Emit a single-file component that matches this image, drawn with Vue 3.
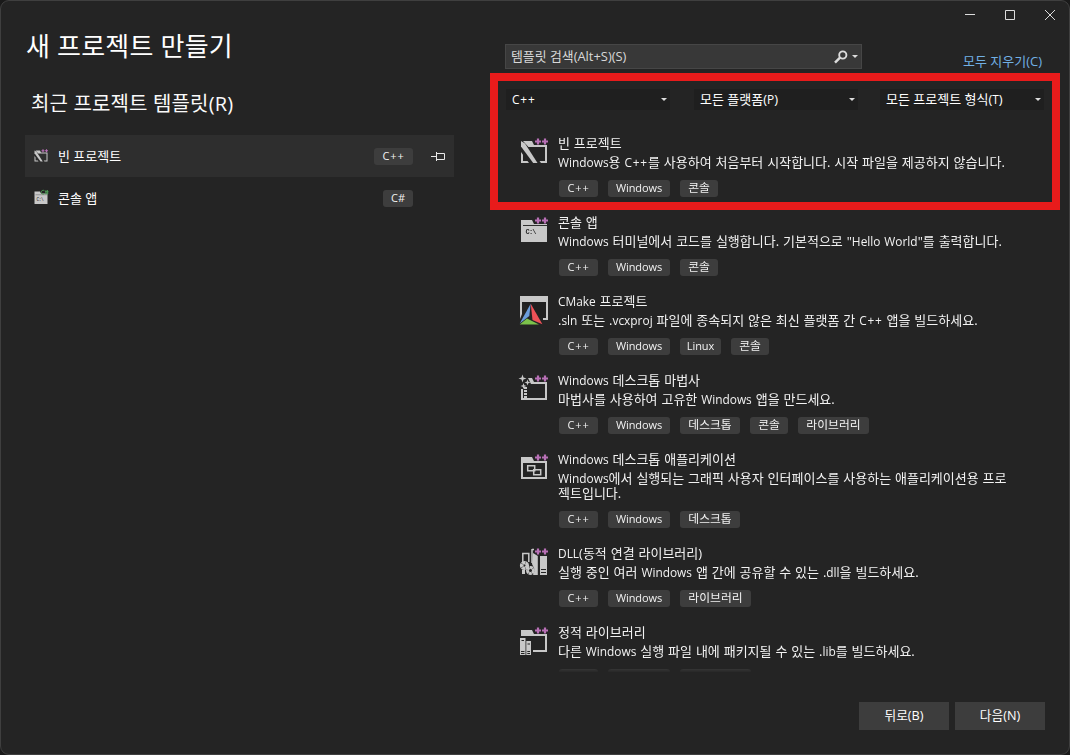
<script setup>
import { h } from 'vue'

const recent = [
  { name: '빈 프로젝트', tag: 'C++', icon: 'blank', pinned: true },
  { name: '콘솔 앱', tag: 'C#', icon: 'cs', pinned: false },
]
const filters = ['C++', '모든 플랫폼(P)', '모든 프로젝트 형식(T)']
const templates = [
  { icon: 'blank', name: '빈 프로젝트', lines: ['Windows용 C++를 사용하여 처음부터 시작합니다. 시작 파일을 제공하지 않습니다.'], tags: ['C++', 'Windows', '콘솔'] },
  { icon: 'console', name: '콘솔 앱', lines: ['Windows 터미널에서 코드를 실행합니다. 기본적으로 "Hello World"를 출력합니다.'], tags: ['C++', 'Windows', '콘솔'] },
  { icon: 'cmake', name: 'CMake 프로젝트', lines: ['.sln 또는 .vcxproj 파일에 종속되지 않은 최신 플랫폼 간 C++ 앱을 빌드하세요.'], tags: ['C++', 'Windows', 'Linux', '콘솔'] },
  { icon: 'wizard', name: 'Windows 데스크톱 마법사', lines: ['마법사를 사용하여 고유한 Windows 앱을 만드세요.'], tags: ['C++', 'Windows', '데스크톱', '콘솔', '라이브러리'] },
  { icon: 'desktop', name: 'Windows 데스크톱 애플리케이션', lines: ['Windows에서 실행되는 그래픽 사용자 인터페이스를 사용하는 애플리케이션용 프로', '젝트입니다.'], tags: ['C++', 'Windows', '데스크톱'] },
  { icon: 'dll', name: 'DLL(동적 연결 라이브러리)', lines: ['실행 중인 여러 Windows 앱 간에 공유할 수 있는 .dll을 빌드하세요.'], tags: ['C++', 'Windows', '라이브러리'] },
  { icon: 'lib', name: '정적 라이브러리', lines: ['다른 Windows 실행 파일 내에 패키지될 수 있는 .lib를 빌드하세요.'], tags: ['C++', 'Windows', '라이브러리'] },
]
const tagWidth = { 'C++': 39, 'C#': 30, Windows: 62, Linux: 41, 콘솔: 38, 데스크톱: 60, 라이브러리: 71 }

// Sets Latin words slightly smaller than the Hangul around them.
const Mixed = (props) =>
  h('span', props.text.split(/([A-Za-z+#]+)/).map((p, i) =>
    i % 2 ? h('span', { class: p.includes('+') ? 'latin plus' : 'latin' }, p) : p))
Mixed.props = ['text']
</script>

<template>
  <div class="window">
    <svg class="defs" width="0" height="0">
      <symbol id="plus" viewBox="0 0 32 34">
        <path d="M17 7.500h6M20 4.500v6M24 7.500h6M27 4.500v6" stroke="#b870b6" stroke-width="2.200" fill="none" />
      </symbol>
      <symbol id="blank" viewBox="0 0 32 34">
        <path d="M5 7h9l2 4h13v18h-6l-1.500-2H27V13H10.500z" fill="#c8c8c8" />
        <path d="M3 7l4 2.500L19.500 29h-4.300L3 12.500z" fill="#c8c8c8" />
        <path d="M3 18l2 2.800V27h4.500l1.500 2H3z" fill="#c8c8c8" />
        <use href="#plus" />
      </symbol>
      <symbol id="console" viewBox="0 0 32 34">
        <path d="M3 7h11l2 4h13v18H3z" fill="#c8c8c8" />
        <path d="M5 12.500h24" stroke="#303030" />
        <use href="#plus" />
      </symbol>
      <symbol id="cs" viewBox="0 0 32 34">
        <path d="M3 5h11l2 4h13v21H3z" fill="#c8c8c8" />
        <path d="M5 11.500h24" stroke="#606060" />
        <path d="M23 3.500a4 4 0 1 0 0 6M24 5h7M24 8h7M26 2v9M29 2v9" stroke="#4d9b55" stroke-width="1.700" fill="none" />
      </symbol>
      <symbol id="cmake" viewBox="0 0 32 34">
        <path d="M2 4h28v24h-5v-2h3V10H4v12l-2 5z" fill="#c8c8c8" />
        <path d="M4 10h24v16h-7z" fill="#202020" />
        <path d="M12.700 11.800L1.700 32.300h22.800z" fill="#242424" />
        <path d="M12.700 11.800L1.700 31.500 11.300 24z" fill="#6b9ddc" />
        <path d="M12.700 11.800l11.700 20.500-9.900-4.400z" fill="#ef5157" />
        <path d="M1.700 32.500l7.300-6.100 12 6.100z" fill="#7cc24b" />
      </symbol>
      <symbol id="wizard" viewBox="0 0 32 34">
        <path d="M10 7h4l2 4h13v18H3V18h2v9h22V13H13z" fill="#c8c8c8" />
        <path d="M4.500 3.500l1 3 3 1-3 1-1 3-1-3-3-1 3-1zM9.500 8.500l.8 2.200 2.200.8-2.200.8-.8 2.200-.8-2.200-2.200-.8 2.200-.8zM5.500 12l.8 2.200 2.200.8-2.200.8-.8 2.200-.8-2.200L2.500 15l2.200-.8z" fill="#c8c8c8" />
        <path d="M7.500 16v11" stroke="#c8c8c8" stroke-width="3" stroke-dasharray="2 1" />
        <use href="#plus" />
      </symbol>
      <symbol id="desktop" viewBox="0 0 32 34">
        <path d="M3 7h11l2 4h13v18H3zM5 13v14h22V13z" fill="#c8c8c8" fill-rule="evenodd" />
        <path d="M9.700 15.700h7v5h-7zM15.700 19.700h7v5h-7z" stroke="#c8c8c8" stroke-width="1.500" fill="#242424" />
        <use href="#plus" />
      </symbol>
      <symbol id="dll" viewBox="0 0 32 34">
        <path d="M4.800 18V9.500h6V18M14 5.500h2M14 5v14" stroke="#c8c8c8" stroke-width="1.500" fill="none" />
        <path d="M15 9l4.800 3v19H15l2-5-3-6zM22 12h7v19h-7z" fill="#c8c8c8" />
        <path d="M23 25.500h5M23 28.500h5" stroke="#242424" stroke-width="1" />
        <circle cx="6.500" cy="21.500" r="2.800" stroke="#c8c8c8" stroke-width="3.600" stroke-dasharray="3.200 .3" fill="none" />
        <circle cx="12.500" cy="26.500" r="3" stroke="#c8c8c8" stroke-width="3" stroke-dasharray="2.900 .4" fill="none" />
        <path d="M4 26h3v4H4z" fill="#c8c8c8" />
        <use href="#plus" />
      </symbol>
      <symbol id="lib" viewBox="0 0 32 34">
        <path d="M3 7h11l2 4h13v18H15v-2h12V13H3z" fill="#c8c8c8" />
        <path d="M2 15h5.500v17H2zM8.300 18H13v14H8.300z" fill="#c8c8c8" />
        <path d="M3.500 17.500h2.500M9.500 21h2.500M3 28.500h3.500M3 30.500h3.500M9.300 28.500h2.700M9.300 30.500h2.700" stroke="#242424" />
        <use href="#plus" />
      </symbol>
    </svg>

    <section class="left">
      <h1>새 프로젝트 만들기</h1>
      <h2>최근 프로젝트 템플릿(R)</h2>
      <div v-for="r in recent" :key="r.name" class="recent" :class="{ active: r.pinned }">
        <svg class="mini" viewBox="0 0 32 34">
          <use :href="'#' + r.icon" />
          <text v-if="r.icon === 'cs'" class="prompt" x="7" y="24" font-size="9">C:\</text>
        </svg>
        <span class="rname">{{ r.name }}</span>
        <span class="tag" :style="{ width: tagWidth[r.tag] + 'px' }"><Mixed :text="r.tag" /></span>
        <svg v-if="r.pinned" class="pin" width="15" height="9" fill="none" stroke="#e8e8e8">
          <path d="M0 4.500h5M5.500 0v9" /><path d="M6 1.500h7.500v6H6" />
        </svg>
      </div>
    </section>

    <section class="right">
      <div class="controls">
        <svg width="100" height="12" fill="none" stroke="#dcdcdc">
          <path d="M5 5.500h10M45.500 1.500h9v9h-9z" /><path d="M85 1l10 10M95 1L85 11" />
        </svg>
      </div>
      <div class="searchrow">
        <div class="search">
          <span>템플릿 검색(Alt+S)(S)</span>
          <svg width="24" height="14">
            <circle cx="8.800" cy="5" r="3.600" fill="none" stroke="#dcdcdc" stroke-width="1.900" />
            <path d="M6 7.700L1 12.700" stroke="#dcdcdc" stroke-width="2.500" />
            <path d="M18 5h6l-3 3z" fill="#dcdcdc" />
          </svg>
        </div>
        <a>모두 지우기(C)</a>
      </div>
      <div class="filters">
        <div v-for="f in filters" :key="f" class="combo">
          <Mixed :text="f" />
          <svg width="6" height="3"><path d="M0 0h6L3 3z" fill="#dcdcdc" /></svg>
        </div>
      </div>
      <div class="list">
        <div v-for="t in templates" :key="t.name" class="item">
          <svg class="icon" viewBox="0 0 32 34">
            <use :href="'#' + t.icon" />
            <text v-if="t.icon === 'console'" class="prompt bold" x="7.500" y="20.500" font-size="7">C:\</text>
          </svg>
          <div class="info">
            <div class="name"><Mixed :text="t.name" /></div>
            <div class="desc"><div v-for="l in t.lines" :key="l"><Mixed :text="l" /></div></div>
            <div class="tags">
              <span v-for="g in t.tags" :key="g" class="tag" :style="{ width: tagWidth[g] + 'px' }"><Mixed :text="g" /></span>
            </div>
          </div>
        </div>
      </div>
      <div class="buttons"><button>뒤로(B)</button><button>다음(N)</button></div>
    </section>
    <div class="highlight"></div>
  </div>
</template>

<style>
body { background: #1a1a1a; }
.latin { font-size: 11.9px; }
.latin.plus { letter-spacing: 0.8px; }
.tag .latin { font-size: 11px; letter-spacing: -0.1px; }
.tag .latin.plus { letter-spacing: 0.9px; }
</style>
<style scoped>
.window { position: relative; box-sizing: border-box; width: 1070px; height: 755px; display: flex; background: #242424; border: 1px solid #3f3f3f; border-radius: 9px; overflow: hidden; color: #f2f2f2; font: 13px "Open Sans", "Noto Sans CJK KR", sans-serif; white-space: nowrap; }
.defs { position: absolute; }
.prompt { font-family: "Liberation Mono", monospace; letter-spacing: -0.8px; fill: #242424; }
.bold { font-weight: 700; }
.left { width: 429px; padding: 27px 0 0 24px; }
h1, h2 { margin: 0; font-weight: 400; }
h1 { font-size: 26px; line-height: 36px; padding-left: 1px; letter-spacing: 0.2px; color: #fff; }
h2 { font-size: 20px; line-height: 30px; margin-top: 25px; padding-left: 6px; letter-spacing: 0.15px; color: #fafafa; }
.recent { display: flex; align-items: center; box-sizing: border-box; height: 42px; padding: 0 41px 0 8px; }
h2 + .recent { margin-top: 16px; }
.recent.active { background: #2e2e2e; padding-right: 8px; }
.mini { width: 16px; height: 17px; margin-top: -2px; }
.rname { flex: 1; padding: 0 0 2px 9px; color: #fff; }
.pin { margin: 0 0 0 18px; }
.tag { flex: none; height: 17px; line-height: 14px; border-radius: 3px; background: #3d3d3d; text-align: center; font-size: 11.8px; }
.right { position: relative; flex: 1; padding-left: 51px; }
.controls { height: 43px; padding: 8px 9px 0 0; box-sizing: border-box; text-align: right; line-height: 0; }
.searchrow { display: flex; height: 25px; }
.search { display: flex; align-items: center; justify-content: space-between; box-sizing: border-box; width: 357px; height: 25px; padding: 0 3px 0 5px; border: 1px solid #464646; background: #383838; color: #d8d8d8; font-size: 12.9px; }
.search span { padding-bottom: 2px; }
.searchrow a { margin: 8px 0 0 101px; height: 18px; line-height: 18px; color: #71b0e4; }
.filters { display: flex; gap: 24px; height: 21px; margin: 20px 0 0 1px; }
.combo { display: flex; align-items: center; justify-content: space-between; box-sizing: border-box; width: 164px; height: 21px; padding: 0 3px 1px 6px; background: #1f1f1f; color: #fff; }
.combo > span { padding-bottom: 1px; }
.combo:last-child { margin-left: -2px; }
.list { height: 538px; margin-top: 24px; padding-left: 13px; overflow: hidden; word-spacing: 0.5px; -webkit-mask-image: linear-gradient(#000 533px, transparent 539px); mask-image: linear-gradient(#000 533px, transparent 539px); }
.item { display: flex; gap: 8px; padding-bottom: 16px; }
.item:last-child .tag { line-height: 17px; }
.icon { width: 32px; height: 34px; flex: none; }
.name { height: 21px; line-height: 18px; }
.desc { line-height: 15px; padding-bottom: 10px; }
.tags { display: flex; gap: 10px; padding-left: 1px; }
.buttons { display: flex; gap: 6px; margin: 30px 0 0 354px; }
button { width: 90px; height: 28px; padding: 0 0 3px; border: 0; background: #3d3d3d; color: #fff; font: inherit; font-size: 12.7px; }
.highlight { position: absolute; left: 489px; top: 72px; width: 554px; height: 121px; border: 8px solid #e81b1b; }
</style>
